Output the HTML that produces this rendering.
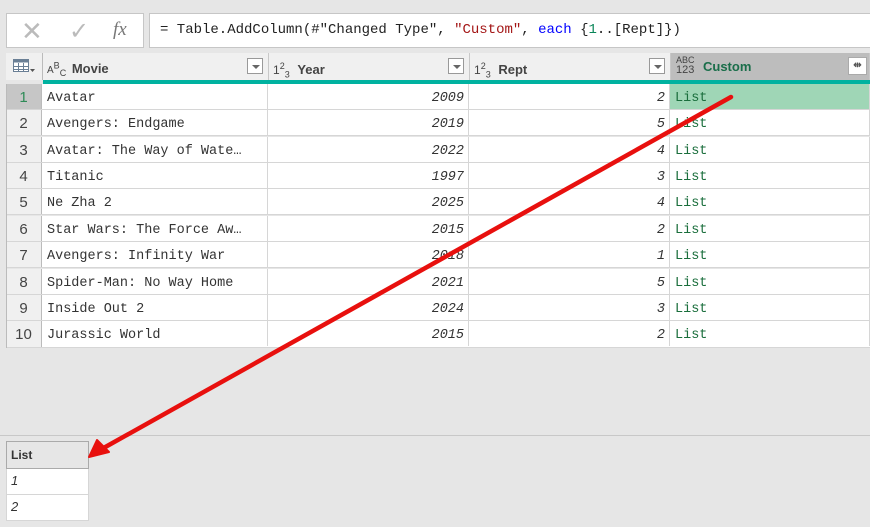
<!DOCTYPE html>
<html><head><meta charset="utf-8"><style>
body{margin:0;width:870px;height:527px;background:#e6e6e6;position:relative;overflow:hidden;font-family:"Liberation Sans",sans-serif}
.abs{position:absolute}
.box{background:#fff;border:1px solid #c6c6c6;box-sizing:border-box}
.hdr{position:absolute;top:53px;height:27px;background:#f0f0f0;border-right:1px solid #c8c8c8;box-sizing:border-box;font-weight:bold;font-size:13px;color:#444;line-height:27px}
.dd{position:absolute;top:5px;width:16px;height:16px;border:1px solid #999;background:#fff;box-sizing:border-box}
.dd:after{content:"";position:absolute;left:4px;top:6px;border:4px solid transparent;border-top:4px solid #666}
.row{position:absolute;left:6px;width:864px;height:26px;border-bottom:1px solid #d6d6d6;background:#fff;box-sizing:border-box}
.c{position:absolute;top:0;height:25px;line-height:29px;border-right:1px solid #d6d6d6;box-sizing:border-box;font-family:"Liberation Mono",monospace;font-size:13.5px;color:#333;white-space:nowrap;overflow:hidden}
.n{left:0;width:36px;background:#f0f0f0;text-align:center;font-family:"Liberation Sans",sans-serif;font-size:15px;color:#444;border-right:1px solid #bbb;line-height:28px}
.m{left:36px;width:226px;padding-left:5px}
.y{left:262px;width:201px;text-align:right;padding-right:4px;font-style:italic}
.r{left:463px;width:201px;text-align:right;padding-right:4px;font-style:italic}
.l{left:664px;width:200px;padding-left:5px;color:#1a6e3c}
</style></head><body>
<div class="abs box" style="left:6px;top:13px;width:138px;height:35px">
<span class="abs" style="left:14px;top:2px;font-size:26px;color:#bbb">✕</span>
<span class="abs" style="left:62px;top:3px;font-size:24px;color:#bbb">✓</span>
<span class="abs" style="left:106px;top:5px;font-family:'Liberation Serif',serif;font-style:italic;font-size:19px;color:#777">fx</span>
</div>
<div class="abs box" style="left:149px;top:13px;width:730px;height:35px;line-height:33px;padding-left:10px;font-family:'Liberation Mono',monospace;font-size:14px;color:#222;white-space:nowrap">= Table.AddColumn(#"Changed Type", <span style="color:#a31515">"Custom"</span>, <span style="color:#0000ff">each</span> {<span style="color:#098658">1</span>..[Rept]})</div>

<div class="hdr" style="left:6px;width:37px;border-right:1px solid #bbb"><svg class="abs" style="left:7px;top:6px" width="22" height="16"><rect x="0.5" y="0.5" width="15" height="12" fill="#fff" stroke="#6a7f95"/><rect x="0.5" y="0.5" width="15" height="3" fill="#6a7f95"/><path d="M5.5 4v9M10.5 4v9M1 7.5h15M1 10.5h15" stroke="#6a7f95"/><path d="M17 10l2.5 3 2.5-3z" fill="#555"/></svg></div>
<div class="hdr" style="left:43px;width:226px"><span style="font-size:10px;margin-left:4px;font-weight:normal">A<sup style="font-size:9px">B</sup><sub style="font-size:9px">C</sub></span> <span style="margin-left:2px">Movie</span><div class="dd" style="left:204px"></div></div>
<div class="hdr" style="left:269px;width:201px"><span style="font-weight:normal;margin-left:4px;font-size:12px">1<sup style="font-size:9px">2</sup><sub style="font-size:9px">3</sub></span> <span style="margin-left:4px">Year</span><div class="dd" style="left:179px"></div></div>
<div class="hdr" style="left:470px;width:201px"><span style="font-weight:normal;margin-left:4px;font-size:12px">1<sup style="font-size:9px">2</sup><sub style="font-size:9px">3</sub></span> <span style="margin-left:4px">Rept</span><div class="dd" style="left:179px"></div></div>
<div class="hdr" style="left:671px;width:199px;background:#bdbdbd;color:#1a6e4a"><span class="abs" style="left:5px;top:2px;font-size:9px;line-height:10px;font-weight:normal;color:#444">ABC<br><span style="font-size:11px">123</span></span><span style="margin-left:32px">Custom</span><span class="abs" style="left:177px;top:4px;width:19px;height:18px;background:#fff;border:1px solid #aaa;box-sizing:border-box;font-size:10px;line-height:16px;text-align:center;color:#555">⇹</span></div>
<div class="abs" style="left:43px;top:80px;width:827px;height:4px;background:#00b2a0"></div>

<div class="row" style="top:84px"><div class="c n" style="background:#c6c6c6;color:#2e8b57">1</div><div class="c m">Avatar</div><div class="c y">2009</div><div class="c r">2</div><div class="c l" style="background:#9fd6b6">List</div></div>
<div class="row" style="top:110px"><div class="c n">2</div><div class="c m">Avengers: Endgame</div><div class="c y">2019</div><div class="c r">5</div><div class="c l">List</div></div>
<div class="row" style="top:137px"><div class="c n">3</div><div class="c m">Avatar: The Way of Wate…</div><div class="c y">2022</div><div class="c r">4</div><div class="c l">List</div></div>
<div class="row" style="top:163px"><div class="c n">4</div><div class="c m">Titanic</div><div class="c y">1997</div><div class="c r">3</div><div class="c l">List</div></div>
<div class="row" style="top:189px"><div class="c n">5</div><div class="c m">Ne Zha 2</div><div class="c y">2025</div><div class="c r">4</div><div class="c l">List</div></div>
<div class="row" style="top:216px"><div class="c n">6</div><div class="c m">Star Wars: The Force Aw…</div><div class="c y">2015</div><div class="c r">2</div><div class="c l">List</div></div>
<div class="row" style="top:242px"><div class="c n">7</div><div class="c m">Avengers: Infinity War</div><div class="c y">2018</div><div class="c r">1</div><div class="c l">List</div></div>
<div class="row" style="top:269px"><div class="c n">8</div><div class="c m">Spider-Man: No Way Home</div><div class="c y">2021</div><div class="c r">5</div><div class="c l">List</div></div>
<div class="row" style="top:295px"><div class="c n">9</div><div class="c m">Inside Out 2</div><div class="c y">2024</div><div class="c r">3</div><div class="c l">List</div></div>
<div class="row" style="top:321px;height:27px"><div class="c n" style="height:26px">10</div><div class="c m">Jurassic World</div><div class="c y">2015</div><div class="c r">2</div><div class="c l">List</div></div>
<div class="abs" style="left:6px;top:84px;width:1px;height:264px;background:#bbb"></div>

<div class="abs" style="left:0;top:435px;width:870px;height:1px;background:#c8c8c8"></div>
<div class="abs" style="left:6px;top:441px;width:83px;height:28px;background:#e6e6e6;border:1px solid #aaa;box-sizing:border-box;font-weight:bold;font-size:12px;color:#333;line-height:26px;padding-left:4px">List</div>
<div class="abs" style="left:6px;top:469px;width:83px;height:26px;background:#fff;border:1px solid #d6d6d6;border-top:none;box-sizing:border-box;font-style:italic;font-size:13px;line-height:24px;padding-left:4px;color:#333">1</div>
<div class="abs" style="left:6px;top:495px;width:83px;height:26px;background:#fff;border:1px solid #d6d6d6;border-top:none;box-sizing:border-box;font-style:italic;font-size:13px;line-height:24px;padding-left:4px;color:#333">2</div>

<svg class="abs" style="left:0;top:0" width="870" height="527"><path d="M731 97L100 450" stroke="#e8100e" stroke-width="4.5" stroke-linecap="round"/><path d="M89 457L97 440L109 452Z" fill="#e8100e" stroke="#e8100e" stroke-width="2" stroke-linejoin="round"/></svg>
</body></html>
